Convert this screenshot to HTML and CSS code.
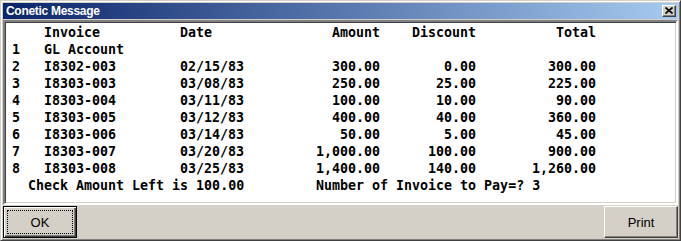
FILE: index.html
```html
<!DOCTYPE html>
<html>
<head>
    <title>Conetic Message</title>
    <link rel="stylesheet" href="styles.css">
</head>
<body>
    <div class="janela">
        <div class="titulo">
            <span class="titulo-texto">Conetic Message</span>
            <button class="fechar" aria-label="Close">
                <svg width="8" height="7" viewBox="0 0 8 7">
                    <path d="M0.5 0.5 L7.5 6.5 M7.5 0.5 L0.5 6.5" stroke="#000" stroke-width="1.6"/>
                </svg>
            </button>
        </div>

        <div class="conteudo">
            <div class="linha cabecalho">
                <span></span><span>Invoice</span><span>Date</span>
                <span class="num">Amount</span><span class="num">Discount</span><span class="num">Total</span>
            </div>
            <div class="linha">
                <span>1</span><span>GL Account</span><span></span>
                <span class="num"></span><span class="num"></span><span class="num"></span>
            </div>
            <div class="linha">
                <span>2</span><span>I8302-003</span><span>02/15/83</span>
                <span class="num">300.00</span><span class="num">0.00</span><span class="num">300.00</span>
            </div>
            <div class="linha">
                <span>3</span><span>I8303-003</span><span>03/08/83</span>
                <span class="num">250.00</span><span class="num">25.00</span><span class="num">225.00</span>
            </div>
            <div class="linha">
                <span>4</span><span>I8303-004</span><span>03/11/83</span>
                <span class="num">100.00</span><span class="num">10.00</span><span class="num">90.00</span>
            </div>
            <div class="linha">
                <span>5</span><span>I8303-005</span><span>03/12/83</span>
                <span class="num">400.00</span><span class="num">40.00</span><span class="num">360.00</span>
            </div>
            <div class="linha">
                <span>6</span><span>I8303-006</span><span>03/14/83</span>
                <span class="num">50.00</span><span class="num">5.00</span><span class="num">45.00</span>
            </div>
            <div class="linha">
                <span>7</span><span>I8303-007</span><span>03/20/83</span>
                <span class="num">1,000.00</span><span class="num">100.00</span><span class="num">900.00</span>
            </div>
            <div class="linha">
                <span>8</span><span>I8303-008</span><span>03/25/83</span>
                <span class="num">1,400.00</span><span class="num">140.00</span><span class="num">1,260.00</span>
            </div>
            <div class="rodape">
                <span class="saldo">Check Amount Left is 100.00</span>
                <span>Number of Invoice to Pay=? 3</span>
            </div>
        </div>

        <div class="botoes">
            <button id="ok"><span class="foco">OK</span></button>
            <button id="imprimir">Print</button>
        </div>
    </div>
</body>
</html>
```

FILE: styles.css
```css
body {
    margin: 0;
    background: #d4d0c8;
}
.janela {
    width: 681px;
    height: 241px;
    box-sizing: border-box;
    background: #d4d0c8;
    border: 1px solid;
    border-color: #d4d0c8 #404040 #404040 #d4d0c8;
    box-shadow: inset 1px 1px #fff, inset -1px -1px #808080;
    padding: 2px;
    display: flex;
    flex-direction: column;
}
.titulo {
    height: 16px;
    background: linear-gradient(to right, #0a246a, #a6caf0);
    display: flex;
    align-items: center;
    justify-content: space-between;
    padding: 0 2px 0 3px;
}
.titulo-texto {
    color: white;
    font-family: Tahoma, "Liberation Sans", sans-serif;
    font-weight: bold;
    font-size: 12px;
    letter-spacing: -0.3px;
}
.fechar {
    width: 14px;
    height: 12px;
    padding: 0;
    background: #d4d0c8;
    border: 1px solid;
    border-color: #fff #404040 #404040 #fff;
    box-shadow: inset -1px -1px #808080;
    display: flex;
    align-items: center;
    justify-content: center;
}
.conteudo {
    margin-top: 1px;
    height: 186px;
    box-sizing: border-box;
    background: white;
    border: 2px solid;
    border-color: #808080 #fff #fff #808080;
    box-shadow: inset 1px 1px #404040, inset -1px -1px #d4d0c8;
    padding: 2px 0 0 7px;
    font-family: "DejaVu Sans Mono", monospace;
    font-weight: bold;
    font-size: 13.3px;
    line-height: 17px;
    color: black;
}
.linha {
    display: grid;
    grid-template-columns: 32px 136px 64px 136px 96px 120px;
    white-space: pre;
}
.num {
    text-align: right;
}
.rodape {
    display: flex;
    white-space: pre;
}
.saldo {
    width: 288px;
    padding-left: 16px;
}
.botoes {
    display: flex;
    justify-content: space-between;
    margin-top: 1px;
}
.botoes button {
    width: 74px;
    height: 32px;
    background: #d4d0c8;
    font-family: "Liberation Sans", Arial, sans-serif;
    font-size: 13px;
    color: black;
    padding: 0;
    border: 1px solid;
    border-color: #fff #404040 #404040 #fff;
    box-shadow: inset -1px -1px #808080;
}
#ok {
    border: 1px solid black;
    box-shadow: inset 1px 1px #fff, inset -1px -1px #404040, inset -2px -2px #808080;
    padding: 3px;
}
.foco {
    display: flex;
    align-items: center;
    justify-content: center;
    height: 100%;
    border: 1px dotted black;
    box-sizing: border-box;
}
```
